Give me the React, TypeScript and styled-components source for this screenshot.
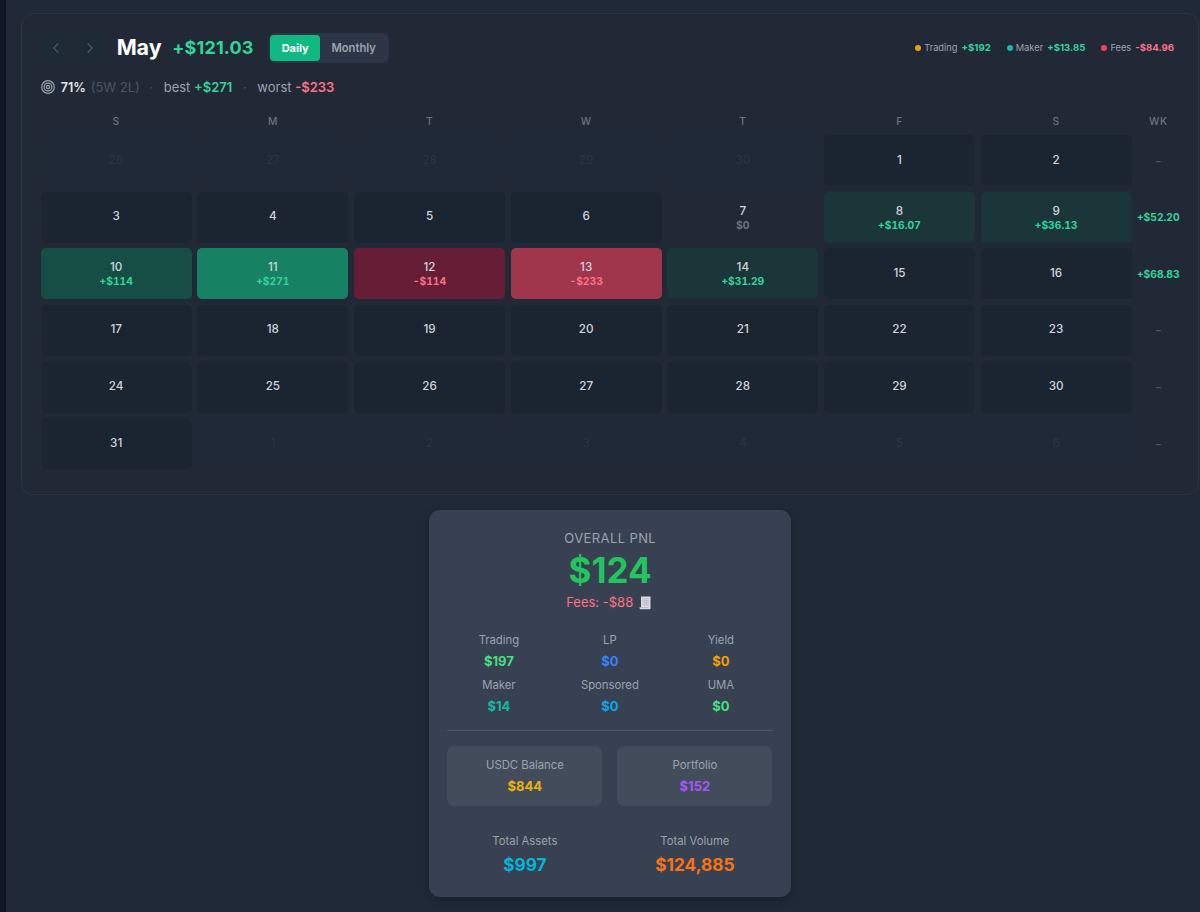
import React from "react";
import styled, { createGlobalStyle } from "styled-components";

const GlobalStyle = createGlobalStyle`
  *, *::before, *::after { box-sizing: border-box; }
  body {
    margin: 0;
    background: #1f2937;
    font-family: Inter, "Liberation Sans", sans-serif;
    -webkit-font-smoothing: antialiased;
    overflow: hidden;
  }
`;

const Page = styled.div`
  height: 912px;
  border-left: 6px solid #111728;
  background: #1f2937;
  padding: 13px 1px 0 15px;
  display: flex;
  flex-direction: column;
`;

const CalendarPanel = styled.section`
  height: 482px;
  flex: none;
  border: 1px solid #2a3543;
  border-radius: 12px;
  padding: 18.5px 18px 0 18.7px;
  background: #212937;
`;

const Header = styled.header`
  display: flex;
  align-items: center;
  height: 30px;
`;

const NavButton = styled.button`
  width: 30px;
  height: 30px;
  margin-right: 4px;
  padding: 0;
  border: 0;
  border-radius: 6px;
  background: #1f2a37;
  display: flex;
  align-items: center;
  justify-content: center;
`;

const Month = styled.h1`
  margin: 0 0 0 8px;
  width: 55.5px;
  padding-bottom: 1px;
  font-size: 21.5px;
  line-height: 29px;
  font-weight: 700;
  letter-spacing: -0.1px;
  color: #fff;
`;

const MonthTotal = styled.span`
  width: 96.5px;
  font-size: 18px;
  font-weight: 650;
  letter-spacing: 0.15px;
  color: #34d399;
`;

const Toggle = styled.div`
  display: flex;
  height: 30px;
  width: 120px;
  padding: 2px 1.5px;
  border-radius: 6px;
  background: #2d3646;
`;

const ToggleOption = styled.button<{ $active?: boolean }>`
  width: ${(p) => (p.$active ? 50 : 67)}px;
  padding: 0;
  border: 0;
  border-radius: 4px;
  font: inherit;
  font-size: ${(p) => (p.$active ? 11 : 11.2)}px;
  font-weight: ${(p) => (p.$active ? 700 : 600)};
  background: ${(p) => (p.$active ? "#10b981" : "transparent")};
  color: ${(p) => (p.$active ? "#fff" : "#9ca3af")};
`;

const Legend = styled.div`
  margin-left: auto;
  margin-right: 6px;
  display: flex;
  gap: 16px;
`;

const LegendItem = styled.div<{ $dot: string }>`
  display: flex;
  align-items: center;
  gap: 4px;
  font-size: 9.3px;
  color: #9ca3af;
  &::before {
    content: "";
    width: 6px;
    height: 6px;
    margin-right: -1px;
    border-radius: 50%;
    background: ${(p) => p.$dot};
  }
`;

const Amount = styled.b<{ $negative?: boolean }>`
  font-weight: 600;
  color: ${(p) => (p.$negative ? "#fb7185" : "#34d399")};
`;

const LegendAmount = styled(Amount)`
  font-weight: 700;
  font-size: 9.6px;
`;

const Stats = styled.div`
  display: flex;
  align-items: center;
  height: 20px;
  margin-top: 14.5px;
  font-size: 13px;
  color: #9ca3af;
  white-space: pre;
`;

const WinRate = styled.b`
  margin-left: 6px;
  width: 30px;
  font-weight: 600;
  font-size: 12.5px;
  color: #e5e7eb;
`;

const Record = styled.span`
  width: 48px;
  color: #4b5563;
`;

const Separator = styled.span`
  width: 25px;
  text-align: center;
  color: #4b5563;
`;

const Grid = styled.div`
  display: grid;
  grid-template-columns: repeat(7, 151px) 42px;
  column-gap: 5.67px;
`;

const WeekdayRow = styled(Grid)`
  height: 28px;
  margin-top: 10.2px;
`;

const Weekday = styled.div`
  font-size: 10.3px;
  line-height: 28px;
  font-weight: 500;
  letter-spacing: 0.5px;
  text-align: center;
  color: #6b7280;
`;

const Days = styled(Grid)`
  grid-auto-rows: 51px;
  row-gap: 5.6px;
`;

type Tone = "idle" | "outside" | "zero" | "gain1" | "gain2" | "gain3" | "loss1" | "loss2";

const toneColors: Record<Tone, string> = {
  idle: "#1b2431",
  outside: "#202937",
  zero: "#212937",
  gain1: "#1b3638",
  gain2: "#164e46",
  gain3: "#178163",
  loss1: "#661e37",
  loss2: "#a0364c",
};

const Day = styled.div<{ $tone: Tone; $filled: boolean }>`
  display: flex;
  flex-direction: column;
  align-items: center;
  justify-content: center;
  padding-top: ${(p) => (p.$filled ? 1.5 : 0)}px;
  padding-bottom: ${(p) => (p.$filled ? 0 : 1)}px;
  border-radius: 5px;
  background: ${(p) => toneColors[p.$tone]};
  color: ${(p) => (p.$tone === "outside" ? "#2b3441" : "#d1d5db")};
  font-size: 11.7px;
  line-height: 15px;
  font-weight: 550;
`;

const DayAmount = styled.span<{ $color: string }>`
  font-size: 10.3px;
  line-height: 13.5px;
  font-weight: 700;
  font-feature-settings: "tnum";
  color: ${(p) => p.$color};
`;

const Week = styled.div<{ $empty: boolean }>`
  display: flex;
  align-items: center;
  justify-content: center;
  font-size: 10.3px;
  font-weight: 700;
  white-space: nowrap;
  font-feature-settings: "tnum";
  color: ${(p) => (p.$empty ? "#4b5563" : "#34d399")};
`;

const PnlCard = styled.section`
  width: 362px;
  height: 387px;
  margin: 15px 0 0 408px;
  padding: 18px 18px 0 18.4px;
  border-radius: 11px;
  background: #374151;
  box-shadow: 0 3px 10px rgba(0, 0, 0, 0.2);
  text-align: center;
`;

const CardTitle = styled.div`
  font-size: 13px;
  line-height: 21px;
  letter-spacing: 0.4px;
  color: #9ca3af;
`;

const CardTotal = styled.div`
  font-size: 35px;
  line-height: 43px;
  font-weight: 700;
  color: #22c55e;
`;

const CardFees = styled.div`
  display: flex;
  align-items: center;
  justify-content: center;
  gap: 6px;
  margin-left: -3px;
  font-size: 13px;
  line-height: 21px;
  color: #fb7185;
`;

const Breakdown = styled.div`
  display: grid;
  grid-template-columns: 103px 103px 103px;
  grid-auto-rows: 42px;
  column-gap: 8px;
  row-gap: 3.4px;
  margin-top: 16.5px;
  height: 101.5px;
  border-bottom: 1px solid #4b5563;
`;

const Metric = styled.div`
  display: flex;
  flex-direction: column;
`;

const MetricLabel = styled.span`
  font-size: 11.3px;
  line-height: 20px;
  color: #9ca3af;
`;

const MetricValue = styled.span<{ $color: string; $large?: boolean }>`
  font-size: ${(p) => (p.$large ? 17.3 : 13)}px;
  line-height: ${(p) => (p.$large ? 28 : 22)}px;
  font-weight: ${(p) => (p.$large ? 700 : 650)};
  color: ${(p) => p.$color};
`;

const Balances = styled.div`
  display: grid;
  grid-template-columns: 155px 155px;
  column-gap: 15px;
  margin-top: 15px;
`;

const BalanceBox = styled(Metric)`
  height: 60px;
  padding-top: 9px;
  border-radius: 7px;
  background: #434c5b;
`;

const Totals = styled(Balances)`
  margin-top: 25px;
`;

interface DayData {
  label: number;
  tone?: Tone;
  amount?: string;
}

const d = (label: number, tone?: Tone, amount?: string): DayData => ({ label, tone, amount });

const weeks: { days: DayData[]; total: string }[] = [
  { days: [...[26, 27, 28, 29, 30].map((n) => d(n, "outside")), d(1), d(2)], total: "–" },
  { days: [d(3), d(4), d(5), d(6), d(7, "zero", "$0"), d(8, "gain1", "+$16.07"), d(9, "gain1", "+$36.13")], total: "+$52.20" },
  {
    days: [d(10, "gain2", "+$114"), d(11, "gain3", "+$271"), d(12, "loss1", "-$114"), d(13, "loss2", "-$233"), d(14, "gain1", "+$31.29"), d(15), d(16)],
    total: "+$68.83",
  },
  { days: [17, 18, 19, 20, 21, 22, 23].map((n) => d(n)), total: "–" },
  { days: [24, 25, 26, 27, 28, 29, 30].map((n) => d(n)), total: "–" },
  { days: [d(31), ...[1, 2, 3, 4, 5, 6].map((n) => d(n, "outside"))], total: "–" },
];

const amountColor = (amount: string) =>
  amount.startsWith("+") ? "#34d399" : amount.startsWith("-") ? "#fb7185" : "#6b7280";

const Chevron = ({ right }: { right?: boolean }) => (
  <svg width="14" height="14" viewBox="0 0 14 14" fill="none" stroke="#4b5563" strokeWidth="1.3" strokeLinecap="round" strokeLinejoin="round">
    <path d={right ? "M5 2.700 9.200 7 5 11.300" : "M9 2.700 4.800 7 9 11.300"} />
  </svg>
);

const TargetIcon = () => (
  <svg width="14" height="14" viewBox="0 0 14 14" fill="none" stroke="#9ca3af" strokeWidth="1.2">
    <circle cx="7" cy="7" r="6.3" />
    <circle cx="7" cy="7" r="3.9" />
    <circle cx="7" cy="7" r="1.6" />
  </svg>
);

const ReceiptIcon = () => (
  <svg width="12" height="14" viewBox="0 0 12 14">
    <path d="M2 .5h9.500v11.500c0 .8-.4 1.300-1.100 1.300H1.500C.8 13.300.4 12.500.4 11.300H2z" fill="#dcdbe6" />
    <path d="M3.500 2.800h6.500M3.500 4.900h6.500M3.500 7h6.500M3.500 9.100h6.500M1 11.600h8.500" stroke="#aaa9bb" strokeWidth=".7" fill="none" />
    <path d="M5.600 2.500v7M8 2.500v7" stroke="#bdbccb" strokeWidth=".5" />
  </svg>
);

const breakdown = [
  ["Trading", "$197", "#4ade80"],
  ["LP", "$0", "#3b82f6"],
  ["Yield", "$0", "#f59e0b"],
  ["Maker", "$14", "#14b8a6"],
  ["Sponsored", "$0", "#0ea5e9"],
  ["UMA", "$0", "#4ade80"],
];

export default function App() {
  return (
    <>
      <GlobalStyle />
      <Page>
        <CalendarPanel>
          <Header>
            <NavButton aria-label="Previous month"><Chevron /></NavButton>
            <NavButton aria-label="Next month"><Chevron right /></NavButton>
            <Month>May</Month>
            <MonthTotal>+$121.03</MonthTotal>
            <Toggle>
              <ToggleOption $active>Daily</ToggleOption>
              <ToggleOption>Monthly</ToggleOption>
            </Toggle>
            <Legend>
              <LegendItem $dot="#f59e0b">Trading <LegendAmount>+$192</LegendAmount></LegendItem>
              <LegendItem $dot="#14b8a6">Maker <LegendAmount>+$13.85</LegendAmount></LegendItem>
              <LegendItem $dot="#f43f5e">Fees <LegendAmount $negative>-$84.96</LegendAmount></LegendItem>
            </Legend>
          </Header>
          <Stats>
            <TargetIcon />
            <WinRate>71%</WinRate>
            <Record>(5W 2L)</Record>
            <Separator>·</Separator>
            <span>best </span>
            <Amount>+$271</Amount>
            <Separator>·</Separator>
            <span>worst </span>
            <Amount $negative>-$233</Amount>
          </Stats>
          <WeekdayRow>
            {["S", "M", "T", "W", "T", "F", "S", "WK"].map((name, i) => (
              <Weekday key={i}>{name}</Weekday>
            ))}
          </WeekdayRow>
          <Days>
            {weeks.map((week, w) => (
              <React.Fragment key={w}>
                {week.days.map((day, i) => (
                  <Day key={i} $tone={day.tone ?? "idle"} $filled={Boolean(day.amount)}>
                    {day.label}
                    {day.amount && <DayAmount $color={amountColor(day.amount)}>{day.amount}</DayAmount>}
                  </Day>
                ))}
                <Week $empty={week.total === "–"}>{week.total}</Week>
              </React.Fragment>
            ))}
          </Days>
        </CalendarPanel>
        <PnlCard>
          <CardTitle>OVERALL PNL</CardTitle>
          <CardTotal>$124</CardTotal>
          <CardFees>Fees: -$88 <ReceiptIcon /></CardFees>
          <Breakdown>
            {breakdown.map(([label, value, color]) => (
              <Metric key={label}>
                <MetricLabel>{label}</MetricLabel>
                <MetricValue $color={color}>{value}</MetricValue>
              </Metric>
            ))}
          </Breakdown>
          <Balances>
            <BalanceBox>
              <MetricLabel>USDC Balance</MetricLabel>
              <MetricValue $color="#eab308">$844</MetricValue>
            </BalanceBox>
            <BalanceBox>
              <MetricLabel>Portfolio</MetricLabel>
              <MetricValue $color="#a855f7">$152</MetricValue>
            </BalanceBox>
          </Balances>
          <Totals>
            <Metric>
              <MetricLabel>Total Assets</MetricLabel>
              <MetricValue $large $color="#06b6d4">$997</MetricValue>
            </Metric>
            <Metric>
              <MetricLabel>Total Volume</MetricLabel>
              <MetricValue $large $color="#f97316">$124,885</MetricValue>
            </Metric>
          </Totals>
        </PnlCard>
      </Page>
    </>
  );
}
